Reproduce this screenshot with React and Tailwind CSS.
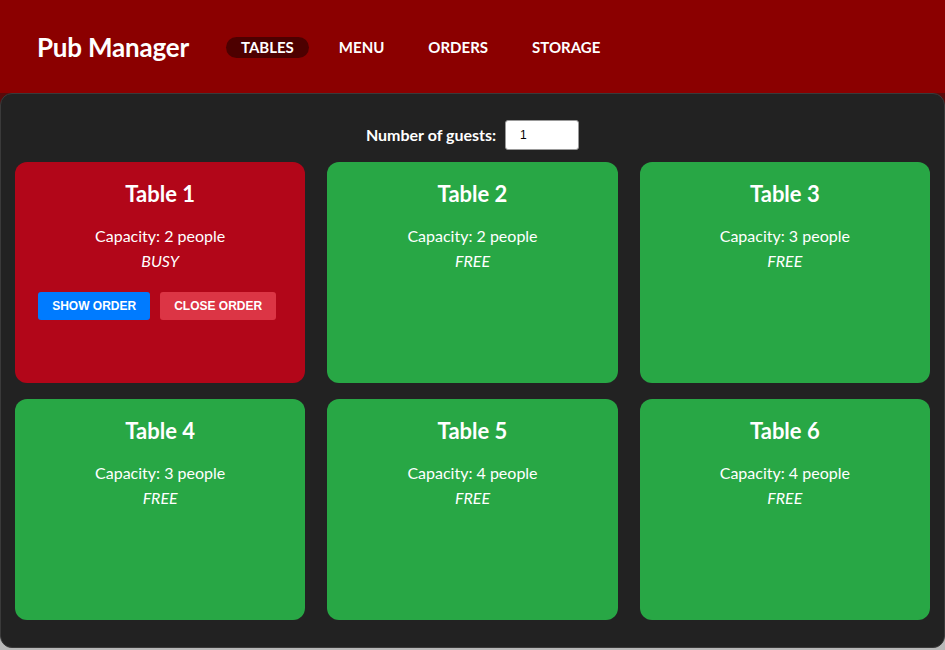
import React from "react";

const tables = [
  { id: 1, cap: 2, busy: true },
  { id: 2, cap: 2, busy: false },
  { id: 3, cap: 3, busy: false },
  { id: 4, cap: 3, busy: false },
  { id: 5, cap: 4, busy: false },
  { id: 6, cap: 4, busy: false },
];

export default function App() {
  return (
    <div className="w-[945px] h-[650px] bg-[#8b0000] flex flex-col overflow-hidden" style={{ fontFamily: "Lato, 'Noto Sans', sans-serif" }}>
      <header className="h-[93px] shrink-0 flex items-center pl-[37px] pt-[2px]">
        <h1 className="text-[26px] font-bold text-white tracking-[-0.2px] mr-[37px]">Pub Manager</h1>
        <nav className="flex items-center gap-[16px] text-[15px] font-bold text-white">
          <span className="bg-[#4d0000] rounded-full px-[15px] h-[21px] flex items-center">TABLES</span>
          <span className="px-[14px]">MENU</span>
          <span className="px-[14px]">ORDERS</span>
          <span className="px-[14px]">STORAGE</span>
        </nav>
      </header>
      <div className="flex-1 flex flex-col bg-linear-to-b from-[#5a0a0a] from-50% to-[#b8b8b8] to-50%">
        <main className="flex-1 bg-[#222222] rounded-[12px] border border-[#3a3a3a] px-[14px] pt-[26px] mb-[2px]">
          <div className="flex items-center justify-center gap-[9px] text-white text-[16px] font-bold">
            <span>Number of guests:</span>
            <div className="w-[74px] h-[30px] bg-white rounded-[3px] border border-[#999] flex items-center pl-[14px] text-black text-[12px] font-normal" style={{ fontFamily: "'Liberation Sans', Arial, sans-serif" }}>1</div>
          </div>
          <div className="grid grid-cols-3 gap-x-[22px] gap-y-[16px] mt-[12px]">
            {tables.map((t) => (
              <div key={t.id} className={`h-[221px] rounded-[12px] flex flex-col items-center text-white ${t.busy ? "bg-[#b20619]" : "bg-[#28a745]"}`}>
                <div className="mt-[17px] text-[22px] font-bold leading-[30px]">Table {t.id}</div>
                <div className="mt-[16px] text-[16px] leading-[22px]">Capacity: {t.cap} people</div>
                <div className="mt-[3px] text-[16px] italic leading-[22px]">{t.busy ? "BUSY" : "FREE"}</div>
                {t.busy && (
                  <div className="flex gap-[10px] mt-[20px] mr-[6px]" style={{ fontFamily: "'Liberation Sans', Arial, sans-serif" }}>
                    <button className="w-[112px] h-[28px] bg-[#007bff] rounded-[3px] text-[12px] font-bold text-white">SHOW ORDER</button>
                    <button className="w-[116px] h-[28px] bg-[#dc3545] rounded-[3px] text-[12px] font-bold text-white">CLOSE ORDER</button>
                  </div>
                )}
              </div>
            ))}
          </div>
        </main>
      </div>
    </div>
  );
}
